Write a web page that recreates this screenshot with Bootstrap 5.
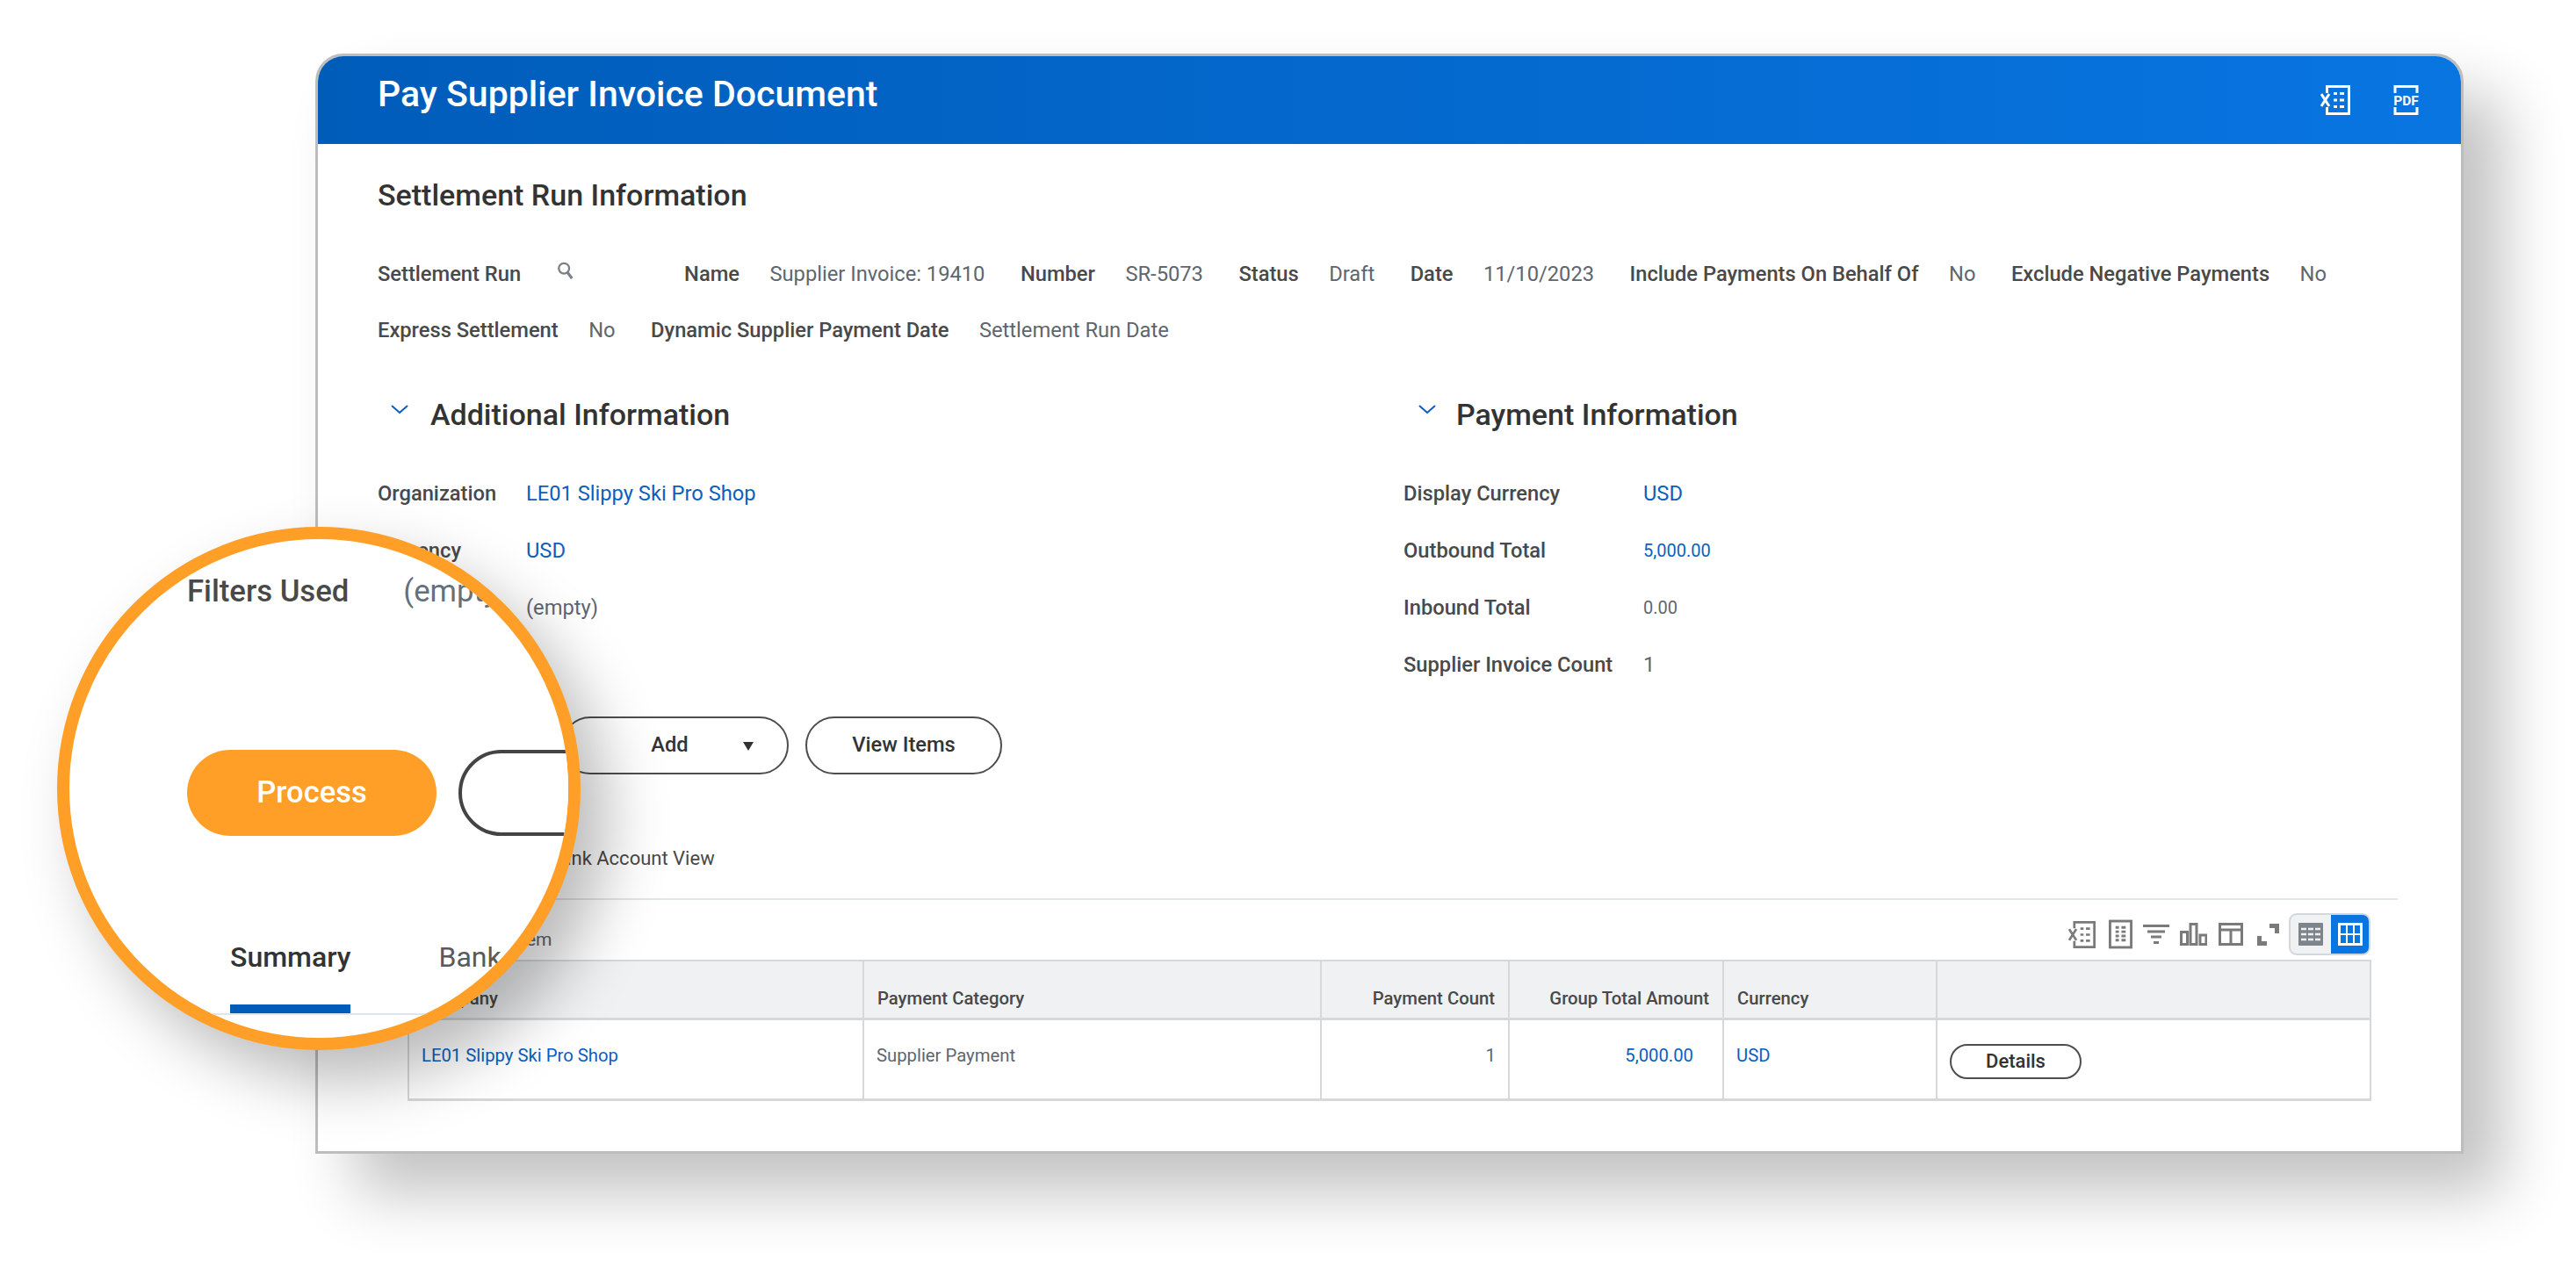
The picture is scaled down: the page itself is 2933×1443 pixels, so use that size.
<!DOCTYPE html>
<html lang="en">
<head>
<meta charset="utf-8">
<title>Pay Supplier Invoice Document</title>
<link rel="stylesheet" href="https://cdn.jsdelivr.net/npm/bootstrap@5.3.0/dist/css/bootstrap.min.css">
<style>
html,body{background:#fff;height:1443px;overflow:hidden}
body{font-family:Roboto,"Liberation Sans",sans-serif;color:#494949;font-size:23.7px;position:relative}
.stage{padding:61px 0 0 359px}
.wd{width:2446px;height:1253px;background:#fff;border:3px solid #bdbdbd;border-radius:32px 32px 0 0;box-shadow:45px 45px 70px rgba(0,0,0,.24);overflow:hidden}
.wd-head{height:100px;padding:0 47px 14px 68px;background:linear-gradient(90deg,#005cb9,#0875e1);color:#fff}
.wd-title{font-size:41px;font-weight:500;line-height:48px;margin:0}
.wd-body{padding:38px 0 0 68px}
.sec-h{font-size:34px;font-weight:500;color:#333;line-height:40px;margin:0 0 55px}
.pairs{row-gap:34px;column-gap:40.5px;line-height:30px;margin-bottom:59px;width:2340px}
.lbl{font-weight:500;color:#494949}
.val{color:#5e666e;margin-left:34.5px}
.srch{margin-left:41px;margin-right:125px;width:20px;height:20px;color:#7b8087;margin-top:1px}
.sub-h{font-size:34px;font-weight:500;color:#333;line-height:44px;margin:0}
.chev{width:20px;height:10px;color:#0b5fbe;margin-left:15px;margin-top:-13px}
.col-a{width:1168px}
.col-b{width:1000px}
.sub-gap-a{gap:25px;margin-bottom:53px}
.sub-gap-b{gap:23px;margin-bottom:53px;margin-left:2px}
.grid-a,.grid-b{display:grid;row-gap:35px;line-height:30px}
.grid-a{grid-template-columns:169px 1fr}
.grid-b{grid-template-columns:273px 1fr}
.lnk{color:#0b5fbe;text-decoration:none}
.mut{color:#5e666e}
.sm-v{font-size:20px}
.acts{margin-top:44px;height:66px;gap:19px}
.pill{height:66px;border:2px solid #4d4d4d;border-radius:33px;background:#fff;color:#333;font-weight:500;font-size:23.7px;display:inline-flex;align-items:center;justify-content:center;padding:0}
.pill-pr{width:190px;border:0;background:#ff9f27;color:#fff}
.pill-add{width:259px;position:relative;padding-right:12px}
.pill-add::after{content:"";position:absolute;right:38px;top:27px;border-left:6.5px solid transparent;border-right:6.5px solid transparent;border-top:10px solid #333}
.pill-view{width:224px}
.tabs-bar{margin:81px 0 0;width:2300px;padding-bottom:30px;border-bottom:2px solid #dfe5ec;line-height:30px;gap:48px;padding-left:53px}
.tabs-bar a{color:#494949;text-decoration:none;padding:0;font-size:22px}
.tools{margin:15px 0 5px;width:2269px;height:48px}
.cnt{font-size:21px;color:#5e666e;margin-left:140px;padding-top:15px}
.icons{color:#7a7a7a;gap:0}
.ic{display:block;flex:none}
.tog{display:flex;width:93px;height:48px;margin-left:11px;border:2px solid #d3d7dc;border-radius:9px;overflow:hidden;background:#f0f1f3}
.tog>span{display:flex;align-items:center;justify-content:center;flex:1}
.tog>span.on{background:#0875e1;color:#fff;margin:-2px -2px -2px 0}
.tog>span.off{color:#7d848c}
.tb-wrap{margin-left:34px;width:2234px}
.dt{table-layout:fixed;width:2234px;margin:0;border-collapse:collapse;font-size:20.3px;color:#494949;--bs-table-bg:transparent}
.dt th,.dt td{border:2px solid #d6d8da;padding:0 14px}
.dt thead th{height:66px;background:#f0f1f3;font-weight:500;font-size:20.3px;vertical-align:bottom;padding:0 15px 10px;line-height:24px;border-bottom-width:3px;color:#494949}
.dt tbody td{height:92px;vertical-align:top;padding-top:28px;line-height:24px;color:#5e666e;border-bottom-width:3px}
.c1{width:518px}.c2{width:521px}.c3{width:214px}.c4{width:244px}.c5{width:243px}.c6{width:494px}
.dt tbody td.pad-r{padding-right:33px}
.pill-sm{height:40px;width:150px;border-radius:20px;font-size:22px}
.dt tbody td.det{padding-top:27px}
.lens{position:absolute;left:65px;top:600px;width:596px;height:596px;border:14px solid #ff9f27;border-radius:50%;background:#fff;box-shadow:30px 35px 70px rgba(0,0,0,.27);overflow:hidden}
.lens-in{padding:37px 0 0 134px;width:900px}
.lens-row{line-height:44px;font-size:34.700px}
.lens-row .lbl{font-size:34.700px}
.lens-row .v{color:#64717d;margin-left:62px}
.lens-btns{margin-top:159px;gap:25px}
.big{height:98px;border-radius:49px;font-size:34.500px;display:inline-flex;align-items:center;justify-content:center;background:#ff9f27;color:#fff;border:0;width:284px;padding:0;font-weight:500}
.big-o{background:#fff;border:4px solid #444;width:400px}
.lens-tabs{margin:116px 0 0 -134px;padding:0 0 0 183px;border-bottom:2px solid #dfe5ec;width:900px;line-height:44px;gap:100px;height:88px}
.lens-tabs a{color:#5a5a5a;text-decoration:none;padding:0;height:86px;display:block;font-size:32px}
.lens-tabs a.on{color:#333;font-weight:500;border-bottom:10px solid #005cb9}
</style>
</head>
<body>
<svg width="0" height="0" class="position-absolute">
<defs>
<symbol id="i-xl" viewBox="0 0 34 34"><path d="M7.500 9V1.500h25v31h-25V25" fill="none" stroke="currentColor" stroke-width="3"/><path d="M1 10l9 14M10 10L1 24" fill="none" stroke="currentColor" stroke-width="3"/><path d="M15 9.500h4M22 9.500h5M15 17h4M22 17h5M15 24.500h4M22 24.500h5" stroke="currentColor" stroke-width="3"/></symbol>
<symbol id="i-rep" viewBox="0 0 28 34"><rect x="1.500" y="1.500" width="25" height="31" fill="none" stroke="currentColor" stroke-width="3"/><path d="M8 9h4M15 9h5M8 14h4M15 14h5M8 19h4M15 19h5M8 24h4M15 24h5" stroke="currentColor" stroke-width="3"/></symbol>
<symbol id="i-fil" viewBox="0 0 30 22"><path d="M0 1.500h30M5 8h20M9 14h12M12 20.500h6" stroke="currentColor" stroke-width="3"/></symbol>
<symbol id="i-bar" viewBox="0 0 31 26"><path d="M1.500 10.500h7v14h-7zM12 1.500h7v23h-7zM23 14h7v10.500h-7z" fill="none" stroke="currentColor" stroke-width="3"/></symbol>
<symbol id="i-lay" viewBox="0 0 28 26"><path d="M1.500 1.500h25v23h-25zM1.500 8h25M14 8v16" fill="none" stroke="currentColor" stroke-width="3"/></symbol>
<symbol id="i-exp" viewBox="0 0 25 25"><path d="M14 2.500h8.500V11M2.500 14v8.500H11" fill="none" stroke="currentColor" stroke-width="5"/></symbol>
<symbol id="i-g1" viewBox="0 0 28 26"><rect width="28" height="26" rx="1" fill="currentColor"/><path d="M3 7h6M11 7h6M19 7h6M3 13h6M11 13h6M19 13h6M3 19h6M11 19h6M19 19h6" stroke="#f0f1f3" stroke-width="2.500"/></symbol>
<symbol id="i-g2" viewBox="0 0 28 26"><rect width="28" height="26" fill="#fff"/><path d="M3 3h6v9H3zM11 3h6v9h-6zM19 3h6v9h-6zM3 14h6v9H3zM11 14h6v9h-6zM19 14h6v9h-6z" fill="#0875e1"/></symbol>
<symbol id="i-search" viewBox="0 0 22 22"><circle cx="9" cy="8.500" r="6.500" fill="none" stroke="currentColor" stroke-width="2.500"/><path d="M13 13l6 8" stroke="currentColor" stroke-width="3.500"/></symbol>
<symbol id="i-chev" viewBox="0 0 20 10"><path d="M1 1l9 8 9-8" fill="none" stroke="currentColor" stroke-width="2"/></symbol>
</defs>
</svg>

<div class="stage">
<div class="wd">
  <header class="wd-head d-flex align-items-center justify-content-between">
    <h1 class="wd-title">Pay Supplier Invoice Document</h1>
    <div class="d-flex align-items-center" style="gap:48px;padding-top:14px">
      <svg class="ic" width="34" height="34"><use href="#i-xl"/></svg>
      <svg class="ic" width="31" height="34" viewBox="0 0 31 34"><path d="M3 9V1.500h25V9M3 25v7.500h25V25" fill="none" stroke="currentColor" stroke-width="3"/><text x="15.500" y="22.500" text-anchor="middle" font-family="Roboto,sans-serif" font-weight="700" font-size="15.500" fill="currentColor">PDF</text></svg>
    </div>
  </header>
  <div class="wd-body">
    <h2 class="sec-h">Settlement Run Information</h2>
    <div class="pairs d-flex flex-wrap">
      <div class="d-flex"><span class="lbl">Settlement Run</span><svg class="srch ic"><use href="#i-search"/></svg><span class="lbl">Name</span><span class="val">Supplier Invoice: 19410</span></div>
      <div class="d-flex"><span class="lbl">Number</span><span class="val">SR-5073</span></div>
      <div class="d-flex"><span class="lbl">Status</span><span class="val">Draft</span></div>
      <div class="d-flex"><span class="lbl">Date</span><span class="val">11/10/2023</span></div>
      <div class="d-flex"><span class="lbl">Include Payments On Behalf Of</span><span class="val">No</span></div>
      <div class="d-flex"><span class="lbl">Exclude Negative Payments</span><span class="val">No</span></div>
      <div class="d-flex"><span class="lbl">Express Settlement</span><span class="val">No</span></div>
      <div class="d-flex"><span class="lbl">Dynamic Supplier Payment Date</span><span class="val">Settlement Run Date</span></div>
    </div>
    <div class="d-flex">
      <section class="col-a">
        <div class="d-flex align-items-center sub-gap-a"><svg class="chev ic"><use href="#i-chev"/></svg><h3 class="sub-h">Additional Information</h3></div>
        <div class="grid-a">
          <span class="lbl">Organization</span><a class="lnk" href="#">LE01 Slippy Ski Pro Shop</a>
          <span class="lbl">Currency</span><a class="lnk" href="#">USD</a>
          <span class="lbl">Filters Used</span><span class="mut">(empty)</span>
        </div>
      </section>
      <section class="col-b">
        <div class="d-flex align-items-center sub-gap-b"><svg class="chev ic"><use href="#i-chev"/></svg><h3 class="sub-h">Payment Information</h3></div>
        <div class="grid-b">
          <span class="lbl">Display Currency</span><a class="lnk" href="#">USD</a>
          <span class="lbl">Outbound Total</span><a class="lnk sm-v" href="#">5,000.00</a>
          <span class="lbl">Inbound Total</span><span class="mut sm-v">0.00</span>
          <span class="lbl">Supplier Invoice Count</span><span class="mut">1</span>
        </div>
      </section>
    </div>
    <div class="acts d-flex">
      <button class="pill pill-pr btn">Process</button>
      <button class="pill pill-add btn">Add</button>
      <button class="pill pill-view btn">View Items</button>
    </div>
    <nav class="tabs-bar nav"><a class="nav-link" href="#">Summary</a><a class="nav-link" href="#">Bank Account View</a></nav>
    <div class="tools d-flex justify-content-between">
      <span class="cnt">1 item</span>
      <div class="icons d-flex align-items-center position-relative">
        <svg class="ic" width="31" height="31" style="margin-right:15px"><use href="#i-xl"/></svg>
        <svg class="ic" width="27" height="34" style="margin-right:12px"><use href="#i-rep"/></svg>
        <svg class="ic" width="30" height="22" style="margin-right:12px"><use href="#i-fil"/></svg>
        <svg class="ic" width="31" height="26" style="margin-right:13px"><use href="#i-bar"/></svg>
        <svg class="ic" width="28" height="26" style="margin-right:16px"><use href="#i-lay"/></svg>
        <svg class="ic" width="25" height="25"><use href="#i-exp"/></svg>
        <div class="tog"><span class="off"><svg width="28" height="26"><use href="#i-g1"/></svg></span><span class="on"><svg width="28" height="26"><use href="#i-g2"/></svg></span></div>
      </div>
    </div>
    <div class="tb-wrap">
      <table class="table dt">
        <colgroup><col class="c1"><col class="c2"><col class="c3"><col class="c4"><col class="c5"><col class="c6"></colgroup>
        <thead><tr><th>Company</th><th>Payment Category</th><th class="text-end">Payment Count</th><th class="text-end">Group Total Amount</th><th>Currency</th><th></th></tr></thead>
        <tbody><tr><td><a class="lnk" href="#">LE01 Slippy Ski Pro Shop</a></td><td>Supplier Payment</td><td class="text-end">1</td><td class="text-end pad-r"><a class="lnk" href="#">5,000.00</a></td><td><a class="lnk" href="#">USD</a></td><td class="det"><button class="pill pill-sm btn">Details</button></td></tr></tbody>
      </table>
    </div>
  </div>
</div>
</div>

<aside class="lens">
  <div class="lens-in">
    <div class="lens-row d-flex"><span class="lbl">Filters Used</span><span class="v">(empty)</span></div>
    <div class="lens-btns d-flex"><button class="big btn">Process</button><button class="big big-o btn"></button></div>
    <nav class="lens-tabs nav"><a class="nav-link on" href="#">Summary</a><a class="nav-link" href="#">Bank Account View</a></nav>
  </div>
</aside>
<script src="https://cdn.jsdelivr.net/npm/bootstrap@5.3.0/dist/js/bootstrap.bundle.min.js"></script>
</body>
</html>
